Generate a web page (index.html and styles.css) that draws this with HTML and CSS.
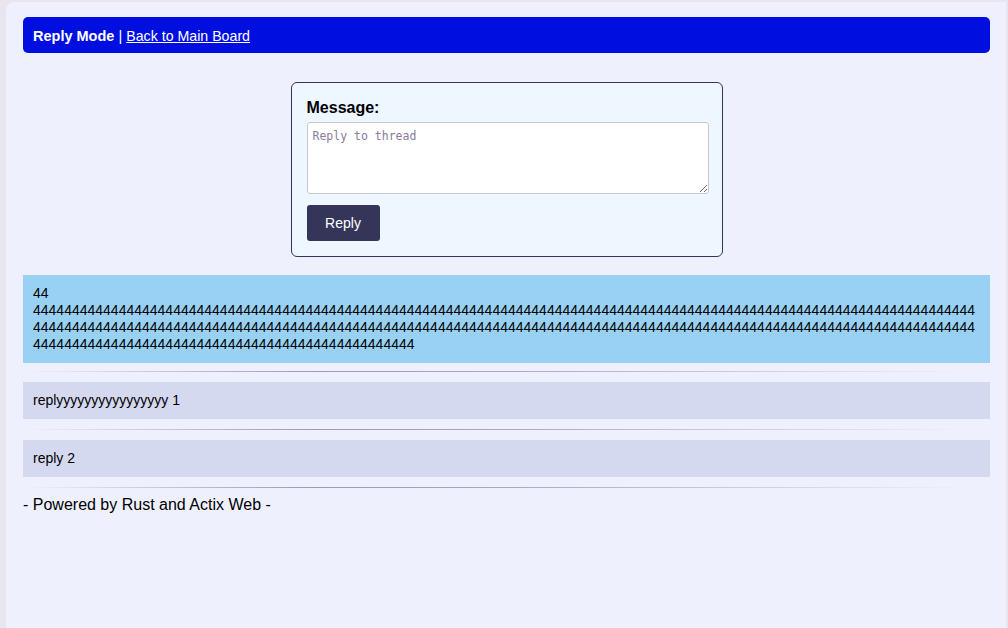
FILE: index.html
```html
<!DOCTYPE html>
<html lang="en">
<head>
<meta charset="utf-8">
<title>Reply Mode</title>
<link rel="stylesheet" href="styles.css">
</head>
<body>
<div class="page">
  <header class="topbar"><strong>Reply Mode</strong>&nbsp;|&nbsp;<a href="#">Back to Main Board</a></header>
  <form class="reply-form">
    <label class="label" for="msg">Message:</label>
    <textarea id="msg" class="msg" placeholder="Reply to thread"></textarea>
    <button type="button" class="btn">Reply</button>
  </form>
  <div class="post op">44<br>444444444444444444444444444444444444444444444444444444444444444444444444444444444444444444444444444444444444444444444444444444444444444444444444444444444444444444444444444444444444444444444444444444444444444444444444444444444444444444444444444444444444444444444444444444444444444444444444444</div>
  <hr class="sep first">
  <div class="post reply">replyyyyyyyyyyyyyyyy 1</div>
  <hr class="sep">
  <div class="post reply">reply 2</div>
  <hr class="sep">
  <footer class="foot">- Powered by Rust and Actix Web -</footer>
</div>
</body>
</html>
```
FILE: styles.css
```css
html {
  background: #e9e5ee;
  height: 100%;
}
body {
  margin: 0;
  height: 100%;
  padding: 2px 2px 0 6px;
  box-sizing: border-box;
  font-family: "Liberation Sans", Arial, sans-serif;
}
.page {
  background: #eef1fd;
  height: 100%;
  box-sizing: border-box;
  border-radius: 8px 0 0 0;
  padding: 15px 16px 0 17px;
  display: flex;
  flex-direction: column;
}
.topbar {
  background: #000fe0;
  color: #fff;
  height: 36px;
  box-sizing: border-box;
  border-radius: 5px;
  display: flex;
  align-items: center;
  padding: 2px 10px 0;
  font-size: 14.5px;
}
.topbar a {
  color: #fff;
  font-size: 14.2px;
}
.reply-form {
  align-self: center;
  width: 432px;
  box-sizing: border-box;
  margin: 29px 0 18px;
  padding: 15px 14px 15px 15px;
  border: 1px solid #35355a;
  border-radius: 6px;
  background: #eef6ff;
  display: flex;
  flex-direction: column;
  align-items: flex-start;
}
.label {
  font-size: 16px;
  font-weight: bold;
  line-height: 18px;
  margin-top: 1px;
  margin-bottom: 5px;
}
.msg {
  width: 402px;
  height: 72px;
  box-sizing: border-box;
  border: 1px solid #c8c8d0;
  border-radius: 3px;
  padding: 6px 5px;
  font-family: "DejaVu Sans Mono", monospace;
  font-size: 11.5px;
  background: #fff;
  margin: 0 0 11px;
}
.msg::placeholder {
  color: #8a7b9c;
}
.btn {
  width: 73px;
  height: 36px;
  border: none;
  border-radius: 3px;
  background: #35355a;
  color: #fff;
  font-family: "Liberation Sans", Arial, sans-serif;
  font-size: 14px;
}
.post {
  padding: 10px 10px;
  font-size: 14px;
  line-height: 17px;
  color: #000;
}
.op {
  background: #99d1f4;
  overflow-wrap: break-word;
  word-break: break-all;
  padding-bottom: 10px;
}
.reply {
  background: #d5d9f0;
  padding: 10px;
  line-height: 17px;
}
.sep {
  border: none;
  height: 1px;
  margin: 10px 0;
  background: linear-gradient(to right, rgba(150,150,175,0), #9a9ab4 30%, #a8a8c0 50%, rgba(150,150,175,0) 98%);
}
.sep.first {
  margin-top: 8px;
}
.foot {
  font-size: 16px;
  line-height: 18px;
  margin-top: -2px;
}
```
